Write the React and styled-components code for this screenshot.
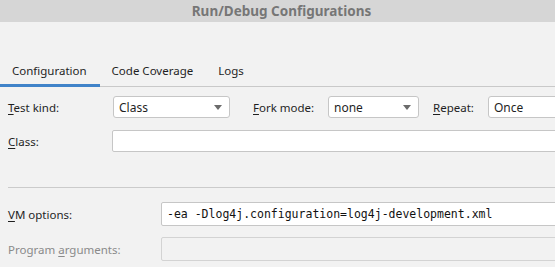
import styled, { createGlobalStyle } from "styled-components";

const GlobalStyle = createGlobalStyle`
  html, body {
    margin: 0;
    padding: 0;
    background: #f2f2f2;
    overflow: hidden;
  }
  body {
    font-family: "Noto Sans", "Open Sans", sans-serif;
    font-size: 11.5px;
    color: #1f1f1f;
  }
`;

const Window = styled.div`
  width: 555px;
  height: 267px;
  overflow: hidden;
  background: #f2f2f2;
  display: flex;
  flex-direction: column;
`;

const TitleBar = styled.div`
  height: 22px;
  flex: none;
  background: #d6d6d6;
  display: flex;
  align-items: center;
  justify-content: center;
  padding-left: 8px;
  font-weight: 700;
  font-size: 13.5px;
  color: #767676;
`;

const Content = styled.div`
  padding-top: 35px;
`;

const TabStrip = styled.div`
  display: flex;
  align-items: flex-end;
  height: 29px;
  border-bottom: 1px solid #c9c9c9;
`;

const Tab = styled.div`
  height: 30px;
  box-sizing: border-box;
  margin-bottom: -1px;
  padding: 0 13px 0 12px;
  display: flex;
  align-items: center;
  border-bottom: 3px solid ${(p) => (p.$active ? "#4083c9" : "transparent")};
  color: #1f1f1f;
  white-space: nowrap;
`;

const Form = styled.div`
  width: 700px;
  padding: 9px 0 0 8px;
  display: flex;
  flex-direction: column;
`;

const Row = styled.div`
  display: flex;
  align-items: center;
  margin-top: ${(p) => p.$gap || 0}px;
`;

const Label = styled.span`
  width: ${(p) => p.$width}px;
  margin-left: ${(p) => p.$before || 0}px;
  flex: none;
  color: ${(p) => (p.$disabled ? "#8a8a8a" : "#1f1f1f")};
  white-space: nowrap;
`;

const Mnemonic = styled.u`
  text-decoration: underline;
  text-underline-offset: 2px;
`;

const Combo = styled.div`
  width: ${(p) => p.$width}px;
  height: 22px;
  box-sizing: border-box;
  flex: none;
  background: #ffffff;
  border: 1px solid #c6c6c6;
  border-radius: 3px;
  padding: 0 7px 0 5px;
  display: flex;
  align-items: center;
  justify-content: space-between;
  font-size: 12px;
`;

const Arrow = styled.span`
  width: 0;
  height: 0;
  border-left: 4.5px solid transparent;
  border-right: 4.5px solid transparent;
  border-top: 5px solid #6b6b6b;
  display: ${(p) => (p.$hidden ? "none" : "block")};
`;

const Field = styled.div`
  flex: 1;
  height: ${(p) => p.$height || 22}px;
  box-sizing: border-box;
  background: ${(p) => (p.$disabled ? "#f2f2f2" : "#ffffff")};
  border: 1px solid ${(p) => (p.$disabled ? "#d3d3d3" : "#c6c6c6")};
  border-radius: 2px;
  padding: 0 5px;
  display: flex;
  align-items: center;
  font-family: "DejaVu Sans Mono", monospace;
  font-size: 11.5px;
  color: #111;
  white-space: nowrap;
`;

const Separator = styled.div`
  height: 1px;
  background: #cbcbcb;
  margin-top: 35px;
`;

export default function App() {
  return (
    <Window>
      <GlobalStyle />
      <TitleBar>Run/Debug Configurations</TitleBar>
      <Content>
        <TabStrip>
          <Tab $active>Configuration</Tab>
          <Tab>Code Coverage</Tab>
          <Tab>Logs</Tab>
        </TabStrip>
        <Form>
          <Row>
            <Label $width={105}>
              <Mnemonic>T</Mnemonic>est kind:
            </Label>
            <Combo $width={117}>
              Class
              <Arrow />
            </Combo>
            <Label $width={75} $before={23}>
              <Mnemonic>F</Mnemonic>ork mode:
            </Label>
            <Combo $width={91}>
              none
              <Arrow />
            </Combo>
            <Label $width={55} $before={14}>
              <Mnemonic>R</Mnemonic>epeat:
            </Label>
            <Combo $width={120}>
              Once
              <Arrow $hidden />
            </Combo>
          </Row>
          <Row $gap={12}>
            <Label $width={104}>
              <Mnemonic>C</Mnemonic>lass:
            </Label>
            <Field />
          </Row>
          <Separator />
          <Row $gap={14}>
            <Label $width={153}>
              <Mnemonic>V</Mnemonic>M options:
            </Label>
            <Field $height={24}>-ea -Dlog4j.configuration=log4j-development.xml</Field>
          </Row>
          <Row $gap={11}>
            <Label $width={153} $disabled>
              Program <Mnemonic>a</Mnemonic>rguments:
            </Label>
            <Field $height={24} $disabled />
          </Row>
        </Form>
      </Content>
    </Window>
  );
}
